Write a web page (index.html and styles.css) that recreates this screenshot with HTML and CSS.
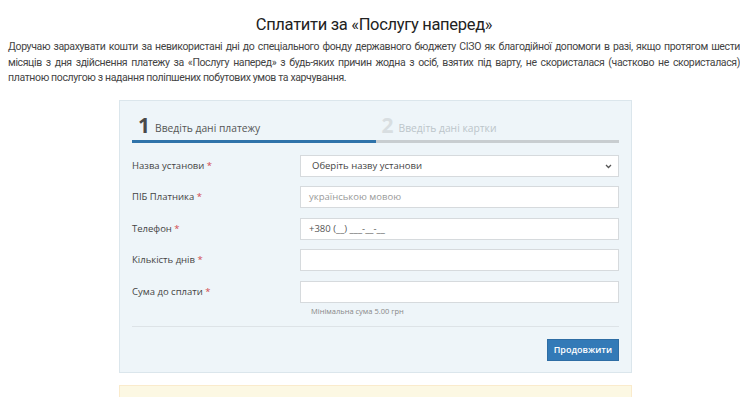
FILE: index.html
```html
<!DOCTYPE html>
<html lang="uk">
<head>
<meta charset="utf-8">
<title>Сплатити за «Послугу наперед»</title>
<link rel="stylesheet" href="styles.css">
</head>
<body>
<div class="page">
  <h1 class="title">Сплатити за «Послугу наперед»</h1>
  <p class="intro">Доручаю зарахувати кошти за невикористані дні до спеціального фонду державного бюджету СІЗО як благодійної допомоги в разі, якщо протягом шести місяців з дня здійснення платежу за «Послугу наперед» з будь-яких причин жодна з осіб, взятих під варту, не скористалася (частково не скористалася) платною послугою з надання поліпшених побутових умов та харчування.</p>

  <div class="panel">
    <div class="steps">
      <div class="step active"><span class="num">1</span><span class="stext">Введіть дані платежу</span></div>
      <div class="step"><span class="num">2</span><span class="stext">Введіть дані картки</span></div>
    </div>

    <div class="row">
      <label class="lbl">Назва установи <span class="req">*</span></label>
      <div class="field select">Оберіть назву установи
        <svg class="chev" width="7" height="5" viewBox="0 0 7 5"><path d="M1 1 L3.5 3.5 L6 1" fill="none" stroke="#555" stroke-width="1.3"/></svg>
      </div>
    </div>
    <div class="row">
      <label class="lbl">ПІБ Платника <span class="req">*</span></label>
      <div class="field placeholder">українською мовою</div>
    </div>
    <div class="row">
      <label class="lbl">Телефон <span class="req">*</span></label>
      <div class="field">+380 (__) ___-__-__</div>
    </div>
    <div class="row">
      <label class="lbl">Кількість днів <span class="req">*</span></label>
      <div class="field"></div>
    </div>
    <div class="row last">
      <label class="lbl">Сума до сплати <span class="req">*</span></label>
      <div class="fcol">
        <div class="field"></div>
        <div class="hint">Мінімальна сума 5.00 грн</div>
      </div>
    </div>
    <div class="sep"></div>
    <div class="actions"><button class="btn">Продовжити</button></div>
  </div>
  <div class="notice"></div>
</div>
</body>
</html>
```
FILE: styles.css
```css
* { box-sizing: border-box; }
html, body { margin: 0; padding: 0; background: #fff; }
body { font-family: "Open Sans", sans-serif; color: #333; overflow: hidden; }
.page { width: 740px; padding: 0 0 0 8px; }
.title {
  font-family: Roboto, sans-serif;
  font-weight: 400;
  font-size: 16.5px;
  letter-spacing: -0.3px;
  color: #222;
  text-align: center;
  margin: 15px 0 0 0;
  line-height: 20px;
}
.intro {
  font-family: Roboto, sans-serif;
  font-size: 10.5px;
  line-height: 15.5px;
  color: #444;
  text-align: justify;
  margin: 4px 0 0 0;
  letter-spacing: -0.37px;
}
.panel {
  width: 513px;
  margin: 14px 0 0 111px;
  background: #eef5f9;
  border: 1px solid #dbe6ec;
  padding: 13px 12px 11px 12px;
}
.steps { display: flex; margin-bottom: 12px; }
.step {
  flex: 1;
  display: flex;
  align-items: flex-end;
  padding: 0 0 4px 6px;
  border-bottom: 3px solid #c8cdd0;
  height: 29px;
}
.step.active { border-bottom-color: #2f73aa; }
.num {
  font-family: "Open Sans", sans-serif;
  font-weight: 700;
  font-size: 21px;
  line-height: 21px;
  color: #d8dee1;
  margin-right: 5px;
}
.step.active .num { color: #4a4a4a; }
.stext { font-size: 10.3px; color: #bcc5ca; line-height: 15px; }
.step.active .stext { color: #555; }
.row { display: flex; align-items: flex-start; margin-bottom: 9.5px; }
.row.last { margin-bottom: 0; }
.lbl {
  width: 168px;
  font-size: 9.5px;
  color: #444;
  line-height: 22px;
}
.req { color: #d2494f; }
.fcol { width: 319px; }
.field {
  width: 319px;
  height: 22px;
  background: #fff;
  border: 1px solid #d6dadd;
  font-size: 9.5px;
  line-height: 20px;
  padding: 0 8px;
  color: #555;
  position: relative;
}
.field.select { padding-left: 11px; color: #444; }
.field.placeholder { color: #999; }
.chev { position: absolute; right: 6px; top: 8px; }
.hint { font-size: 7.5px; color: #888; padding: 3px 0 0 11px; line-height: 11px; }
.sep { height: 1px; background: #dde3e7; margin: 9px 0 12px 0; }
.actions { display: flex; justify-content: flex-end; }
.btn {
  font-family: "Open Sans", sans-serif;
  font-size: 9px;
  font-weight: 600;
  color: #fff;
  background: #337ab7;
  border: 1px solid #2e6da4;
  height: 22px;
  padding: 0 6px;
}
.notice {
  width: 513px;
  height: 20px;
  margin: 12px 0 0 111px;
  background: #fcf8e3;
  border: 1px solid #faebcc;
}
```
